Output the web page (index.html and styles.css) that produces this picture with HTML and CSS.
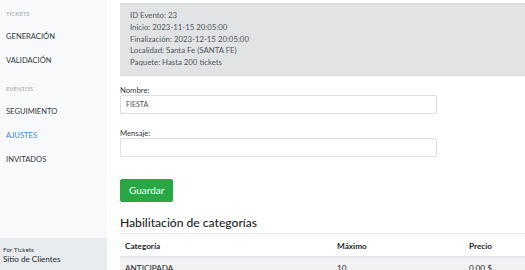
FILE: index.html
```html
<!DOCTYPE html>
<html lang="es">
  <head>
    <meta charset="UTF-8" />
    <meta name="viewport" content="width=device-width, initial-scale=1.0" />
    <title>Ajustes del evento</title>
    <link rel="stylesheet" href="styles.css">
  </head>
  <body>
    <aside class="sidebar">
      <nav class="menu">
        <div class="menu-title">Tickets</div>
        <a href="#" class="menu-link">Generación</a>
        <a href="#" class="menu-link">Validación</a>
        <div class="menu-title">Eventos</div>
        <a href="#" class="menu-link">Seguimiento</a>
        <a href="#" class="menu-link active">Ajustes</a>
        <a href="#" class="menu-link">Invitados</a>
      </nav>
      <div class="sidebar-footer">
        <div class="brand-small">For Tickets</div>
        <div class="brand-name">Sitio de Clientes</div>
      </div>
    </aside>

    <main class="content">
      <div class="event-info">
        <div>ID Evento: 23</div>
        <div>Inicio: 2023-11-15 20:05:00</div>
        <div>Finalización: 2023-12-15 20:05:00</div>
        <div>Localidad: Santa Fe (SANTA FE)</div>
        <div>Paquete: Hasta 200 tickets</div>
      </div>

      <form class="event-form">
        <label for="nombre">Nombre:</label>
        <input type="text" id="nombre" value="FIESTA" />

        <label for="mensaje">Mensaje:</label>
        <input type="text" id="mensaje" />

        <button type="button" class="btn-save">Guardar</button>
      </form>

      <h2>Habilitación de categorías</h2>
      <table>
        <thead>
          <tr>
            <th class="col-cat">Categoría</th>
            <th class="col-max">Máximo</th>
            <th>Precio</th>
          </tr>
        </thead>
        <tbody>
          <tr>
            <td>ANTICIPADA</td>
            <td>10</td>
            <td>0,00 $</td>
          </tr>
        </tbody>
      </table>
    </main>
  </body>
</html>
```

FILE: styles.css
```css
body {
  margin: 0;
  height: 100vh;
  overflow: hidden;
  display: flex;
  font-family: Lato, "Open Sans", sans-serif;
  color: #212529;
  background-color: #ffffff;
}
.sidebar {
  width: 107px;
  flex-shrink: 0;
  background-color: #f8f9fa;
  display: flex;
  flex-direction: column;
  justify-content: space-between;
}
.menu {
  display: flex;
  flex-direction: column;
  padding-top: 8px;
}
.menu-title {
  font-size: 6px;
  text-transform: uppercase;
  color: #9ea4aa;
  padding: 0 6px;
  line-height: 12px;
  margin-bottom: 10px;
}
.menu-link {
  font-size: 7.6px;
  text-transform: uppercase;
  color: #343a40;
  text-decoration: none;
  padding: 0 6px;
  line-height: 12px;
  margin-bottom: 12px;
}
.menu-link + .menu-title {
  margin-top: 5px;
}
.menu-link.active {
  color: #3a86f0;
}
.sidebar-footer {
  background-color: #e9ecef;
  height: 32px;
  padding: 7px 3px 0;
  box-sizing: border-box;
}
.brand-small {
  font-size: 6.5px;
  color: #343a40;
  line-height: 9px;
}
.brand-name {
  font-size: 8.1px;
  color: #212529;
  line-height: 11px;
}
.content {
  flex-shrink: 0;
  width: 500px;
  padding: 3px 0 0 13px;
}
.event-info {
  background-color: #e2e3e5;
  border-top: 1px solid #d6d8db;
  border-bottom: 1px solid #d6d8db;
  padding: 6px 10px 6px;
  font-size: 7.8px;
  line-height: 11.75px;
  color: #50555b;
}
.event-form {
  display: flex;
  flex-direction: column;
  align-items: flex-start;
  margin-top: 9px;
}
label {
  font-size: 7.7px;
  color: #343a40;
  line-height: 10px;
}
input {
  width: 317px;
  height: 19px;
  box-sizing: border-box;
  border: 1px solid #dcdfe3;
  border-radius: 2px;
  padding: 0 5px;
  font-family: inherit;
  font-size: 7px;
  color: #495057;
  margin-bottom: 14px;
}
.btn-save {
  margin-top: 8px;
  height: 23px;
  padding: 0 8px;
  background-color: #28a745;
  color: #ffffff;
  border: 1px solid #28a745;
  border-radius: 2px;
  font-family: inherit;
  font-size: 10px;
}
h2 {
  font-size: 12.1px;
  font-weight: 500;
  line-height: 16px;
  margin: 13px 0 2px;
}
table {
  width: 100%;
  border-collapse: collapse;
  font-size: 8.2px;
}
th,
td {
  text-align: left;
  padding: 4px 5px;
  line-height: 12px;
  border-top: 1px solid #e9ecef;
}
th {
  padding-top: 6px;
  border-bottom: 2px solid #e5e7ea;
}
tbody tr {
  background-color: #f2f2f2;
}
.col-cat {
  width: 202px;
}
.col-max {
  width: 122px;
}
```
